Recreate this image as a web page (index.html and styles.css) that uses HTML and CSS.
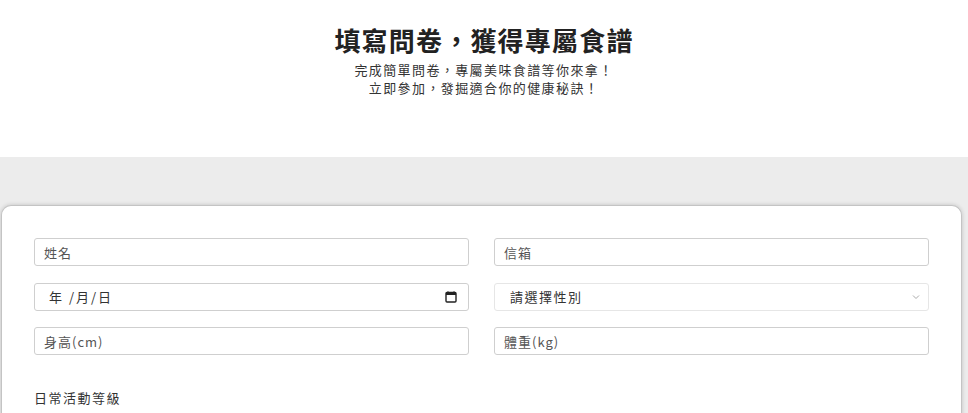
FILE: index.html
```html
<!DOCTYPE html>
<html lang="zh-Hant-TW">
<head>
  <meta charset="UTF-8">
  <title>填寫問卷，獲得專屬食譜</title>
  <link rel="stylesheet" href="styles.css">
</head>
<body>

  <header class="intro">
    <h1 class="intro-title">填寫問卷，獲得專屬食譜</h1>
    <p class="intro-text">完成簡單問卷，專屬美味食譜等你來拿！<br>立即參加，發掘適合你的健康秘訣！</p>
  </header>

  <section class="survey">
    <form class="survey-card">
      <div class="field-grid">
        <input type="text" class="field" placeholder="姓名">
        <input type="email" class="field" placeholder="信箱">
        <div class="input-wrap">
          <input type="text" class="field field-date" placeholder="年 /月/日">
          <svg class="date-icon" width="12" height="12" viewBox="0 0 12 12"><path d="M3 0.5 V2 M9 0.5 V2" stroke="#222" stroke-width="1.4"/><rect x="1" y="1.5" width="10" height="9.5" rx="1" fill="none" stroke="#222" stroke-width="1.4"/><rect x="1" y="1.5" width="10" height="2.5" fill="#222"/></svg>
        </div>
        <div class="input-wrap">
          <select class="field field-select">
            <option>請選擇性別</option>
            <option>男</option>
            <option>女</option>
          </select>
          <svg class="select-arrow" width="8" height="6" viewBox="0 0 8 6"><path d="M1 1.5 L4 4.5 L7 1.5" fill="none" stroke="#aaa" stroke-width="1"/></svg>
        </div>
        <input type="number" class="field" placeholder="身高(cm)">
        <input type="number" class="field" placeholder="體重(kg)">
      </div>

      <p class="group-label">日常活動等級</p>
    </form>
  </section>

</body>
</html>
```

FILE: styles.css
```css
body {
  margin: 0;
  font-family: "Noto Sans CJK TC", "Noto Sans", sans-serif;
  color: #333;
  background: #fff;
}

.intro {
  height: 157px;
  box-sizing: border-box;
  padding-top: 21px;
  text-align: center;
}

.intro-title {
  margin: 0;
  font-size: 26px;
  font-weight: 700;
  letter-spacing: 1.2px;
  line-height: 38px;
  color: #222;
}

.intro-text {
  margin: 2px 0 0;
  font-size: 13px;
  line-height: 18px;
  letter-spacing: 1.4px;
  color: #333;
}

.survey {
  background: #ececec;
  padding: 48px 6px 0 1px;
}

.survey-card {
  background: #fff;
  border: 1px solid #c4c4c4;
  border-bottom: none;
  border-radius: 10px 10px 0 0;
  box-shadow: 0 0 4px rgba(0, 0, 0, 0.18);
  padding: 32px 32px 10px;
}

.field-grid {
  display: grid;
  grid-template-columns: 1fr 1fr;
  column-gap: 25px;
  row-gap: 16.5px;
}

.field {
  box-sizing: border-box;
  width: 100%;
  height: 28px;
  border: 1px solid #cfcfcf;
  border-radius: 3px;
  padding: 0 9px;
  font-family: "Noto Sans CJK TC", "Noto Sans", sans-serif;
  font-size: 13px;
  letter-spacing: 1px;
  color: #333;
  background: #fff;
  outline: none;
}

.field::placeholder {
  color: #555;
}

.input-wrap {
  position: relative;
}

.field-date {
  padding-left: 14px;
  letter-spacing: 2px;
}

.field-date::placeholder {
  color: #333;
}

.date-icon {
  position: absolute;
  right: 12px;
  top: 8px;
  pointer-events: none;
}

.field-select {
  appearance: none;
  -webkit-appearance: none;
  border-color: #e6e6e6;
  padding-left: 15px;
  letter-spacing: 1.5px;
}

.select-arrow {
  position: absolute;
  right: 9px;
  top: 11px;
  pointer-events: none;
}

.group-label {
  margin: 33px 0 0;
  font-size: 13px;
  letter-spacing: 1.5px;
  color: #333;
}
```
